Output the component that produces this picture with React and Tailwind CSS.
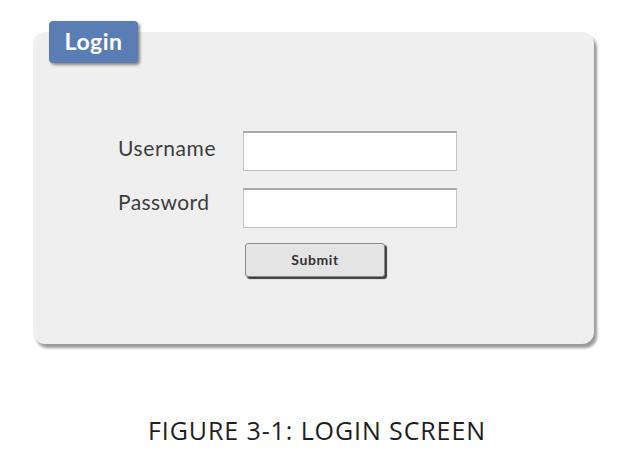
export default function App() {
  return (
    <div className="relative w-[617px] h-[457px] bg-white overflow-hidden" style={{ fontFamily: "Lato, 'Open Sans', sans-serif" }}>
      <div className="pt-[32px] pl-[33px]">
        <div className="w-[561px] h-[312px] bg-[#efefef] rounded-[12px] shadow-[3px_4px_3px_rgba(0,0,0,0.4)] pt-[99px] pl-[85px]">
          <div className="grid grid-cols-[125px_214px] gap-y-[17px] items-center">
            <label className="text-[21px] tracking-[0.6px] text-[#3d3d3d] leading-none -mt-[7px]">Username</label>
            <div className="h-[40px] bg-white border border-[#c4c4c4] border-t-[#a9a9a9] border-t-2" />
            <label className="text-[21px] tracking-[0.4px] text-[#3d3d3d] leading-none -mt-[14px]">Password</label>
            <div className="h-[40px] bg-white border border-[#c4c4c4] border-t-[#a9a9a9] border-t-2" />
            <div />
            <div className="pl-[2px]">
              <button className="w-[140px] h-[34px] -mt-[2px] bg-[#e4e4e4] border border-[#8a8a8a] rounded-[3px] shadow-[2px_2px_1px_rgba(0,0,0,0.75)] text-[14px] tracking-[0.6px] font-bold text-[#333] leading-none">
                Submit
              </button>
            </div>
          </div>
        </div>
      </div>
      <div className="absolute left-[49px] top-[21px] w-[89px] h-[42px] bg-[#5a7db3] rounded-[4px] shadow-[2px_2px_3px_rgba(0,0,0,0.45)] flex items-center justify-center text-white text-[23px] tracking-[0.5px] font-bold leading-none pb-[2px]">
        Login
      </div>
      <div className="mt-[74px] text-center text-[25px] text-[#1e1e1e] tracking-[0.9px] leading-none pl-[17px]" style={{ fontFamily: "'Open Sans', sans-serif" }}>
        FIGURE 3-1: LOGIN SCREEN
      </div>
    </div>
  );
}
